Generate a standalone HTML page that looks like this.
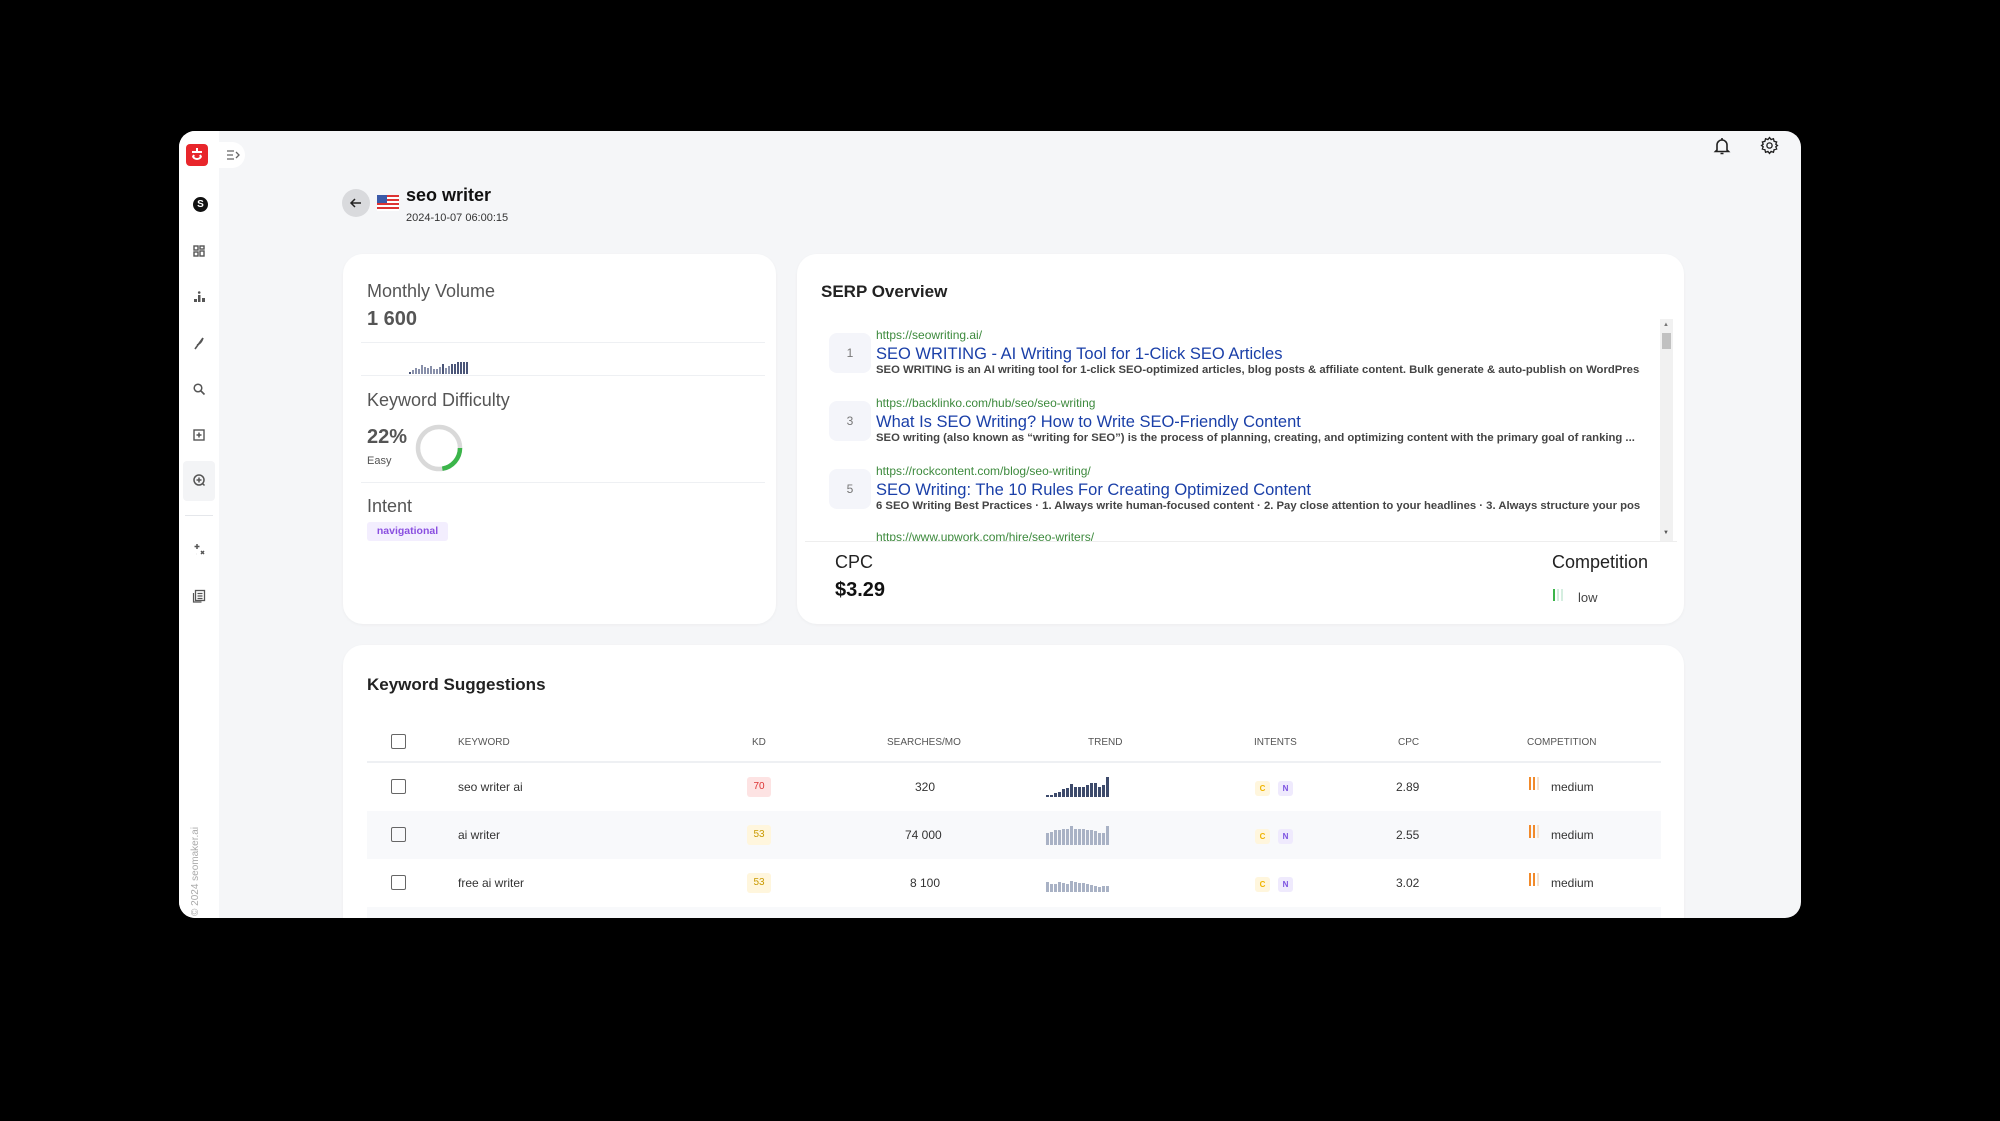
<!DOCTYPE html>
<html><head><meta charset="utf-8"><style>
*{box-sizing:border-box;margin:0;padding:0}
body{width:2000px;height:1121px;background:#000;font-family:"Liberation Sans",Arial,sans-serif;position:relative;overflow:hidden}
.a{position:absolute}
.win{left:179px;top:131px;width:1622px;height:787px;background:#f5f6f8;border-radius:16px;overflow:hidden}
.side{left:0;top:0;width:40px;height:787px;background:#fff}
.card{background:#fff;border-radius:20px;box-shadow:0 1px 3px rgba(0,0,0,.04)}
.ic{width:16px;height:16px;left:12px}
.hr{height:1px;background:#eef0f3}
.spark{display:flex;align-items:flex-end;gap:1px}
.spark i{display:block;width:2px}
.t i{width:3px}
.kd{width:24px;height:20px;border-radius:3px;font-size:10px;text-align:center;line-height:20px}
.tag{width:15px;height:15px;border-radius:3px;font-size:8px;font-weight:bold;text-align:center;line-height:15px}
.cell{font-size:12px;color:#333}
.th{font-size:10px;color:#555;top:737px}
.cb{width:15px;height:15px;border:1.5px solid #666;border-radius:2px;left:391px}
.num{width:42px;height:40px;border-radius:8px;background:#f4f5fa;color:#777;font-size:12px;text-align:center;line-height:40px;left:829px}
.url{font-size:12px;color:#3d8a3d;left:876px}
.ttl{font-size:16.5px;color:#1a3fa8;left:876px}
.dsc{font-size:11.3px;color:#444;font-weight:bold;left:876px;width:764px;white-space:nowrap;overflow:hidden}
</style></head><body>
<div class="a win">
 <div class="a side">
  <div class="a" style="left:7px;top:13px;width:22px;height:22px;background:#e8262b;border-radius:4px"><svg width="22" height="22"><path d="M11 4v3M6 8h10M7 12a4 3 0 0 0 8 0M8 11l-1 2M14 11l1 2" stroke="#fff" stroke-width="2" fill="none"/></svg></div>
  <div class="a" style="left:14px;top:66px;width:15px;height:15px;border-radius:50%;background:#111;color:#fff;font-size:10px;font-weight:bold;text-align:center;line-height:15px">S</div>
  <svg class="a ic" style="top:112px" viewBox="0 0 16 16"><g fill="none" stroke="#555" stroke-width="1.4"><rect x="3" y="3" width="4" height="4"/><rect x="9" y="3" width="4" height="3"/><rect x="3" y="9" width="4" height="4"/><rect x="9" y="8" width="4" height="5"/></g></svg>
  <svg class="a ic" style="top:158px" viewBox="0 0 16 16"><g fill="#555"><rect x="3" y="10" width="3" height="3"/><rect x="7" y="6" width="2.5" height="7"/><circle cx="8.2" cy="3.5" r="1.3"/><rect x="11" y="9" width="3" height="4"/></g></svg>
  <svg class="a ic" style="top:204px" viewBox="0 0 16 16"><path d="M4 14L12 3M6 10c3-1 5-4 6-7" stroke="#555" stroke-width="1.6" fill="none"/></svg>
  <svg class="a ic" style="top:250px" viewBox="0 0 16 16"><circle cx="7" cy="7" r="3.8" fill="none" stroke="#555" stroke-width="1.5"/><path d="M10 10l3.5 3.5" stroke="#555" stroke-width="1.6"/></svg>
  <svg class="a ic" style="top:296px" viewBox="0 0 16 16"><rect x="3" y="3" width="10" height="10" fill="none" stroke="#555" stroke-width="1.4"/><path d="M8 5.5v5M5.5 8h5" stroke="#555" stroke-width="1.5"/></svg>
  <div class="a" style="left:4px;top:330px;width:32px;height:40px;background:#f3f4f6;border-radius:4px"></div>
  <svg class="a ic" style="top:341px" viewBox="0 0 16 16"><circle cx="8" cy="8" r="5" fill="none" stroke="#555" stroke-width="1.5"/><path d="M8 5.5v5M5.5 8h5M11.5 11.5l2 2" stroke="#555" stroke-width="1.5"/></svg>
  <div class="a" style="left:6px;top:384px;width:28px;height:1px;background:#e5e7eb"></div>
  <svg class="a ic" style="top:411px" viewBox="0 0 16 16"><path d="M6 2v5M3.5 4.5h5M10 9l3 3M13 9l-3 3M5 12h.1" stroke="#555" stroke-width="1.5"/></svg>
  <svg class="a ic" style="top:457px" viewBox="0 0 16 16"><rect x="4.5" y="2.5" width="9" height="10" fill="none" stroke="#555" stroke-width="1.3"/><path d="M2.5 5v9h8M6.5 5.5h5M6.5 8h5M6.5 10.5h5" stroke="#555" stroke-width="1.2" fill="none"/></svg>
  <div class="a" style="left:11px;top:785px;transform:rotate(-90deg);transform-origin:0 0;font-size:10px;color:#aaa;white-space:nowrap">© 2024 seomaker.ai</div>
 </div>
 <div class="a" style="left:40px;top:11px;width:26px;height:26px;background:#fff;border-radius:0 13px 13px 0"></div>
 <svg class="a" style="left:47px;top:18px" width="14" height="12" viewBox="0 0 14 12"><path d="M1 2h7M1 6h6M1 10h7M10 3l3 3-3 3" stroke="#666" stroke-width="1.3" fill="none"/></svg>
 <svg class="a" style="left:1534px;top:5px" width="18" height="20" viewBox="0 0 18 20"><path d="M4 14V9a5 5 0 0 1 10 0v5l1.5 1.5h-13z M7.5 17.5h3" stroke="#222" stroke-width="1.6" fill="none"/><path d="M9 2v2" stroke="#222" stroke-width="1.6"/></svg>
 <svg class="a" style="left:1581px;top:5px" width="19" height="19" viewBox="0 0 24 24"><path d="M12 2l2 2.5 3-1 .8 3.2 3.2.8-1 3L22 12l-2 1.5 1 3-3.2.8-.8 3.2-3-1L12 22l-2-2.5-3 1-.8-3.2L3 16.5l1-3L2 12l2-1.5-1-3 3.2-.8L7 3.5l3 1z" fill="none" stroke="#222" stroke-width="1.7"/><circle cx="12" cy="12" r="3.3" fill="none" stroke="#222" stroke-width="1.7"/></svg>
</div>

<div class="a" style="left:342px;top:189px;width:28px;height:28px;border-radius:50%;background:#d9dadd"></div>
<svg class="a" style="left:349px;top:196px" width="14" height="14" viewBox="0 0 14 14"><path d="M12 7H2M6 3L2 7l4 4" stroke="#222" stroke-width="1.5" fill="none"/></svg>
<svg class="a" style="left:377px;top:195px" width="22" height="16" viewBox="0 0 22 16"><rect width="22" height="16" fill="#fff"/><g fill="#d33"><rect y="0" width="22" height="2"/><rect y="4" width="22" height="2"/><rect y="8" width="22" height="2"/><rect y="12" width="22" height="2"/></g><rect width="10" height="8" fill="#3b5aa8"/></svg>
<div class="a" style="left:406px;top:185px;font-size:18px;font-weight:bold;color:#111">seo writer</div>
<div class="a" style="left:406px;top:212px;font-size:11px;color:#333">2024-10-07 06:00:15</div>

<div class="a card" style="left:343px;top:254px;width:433px;height:370px"></div>
<div class="a" style="left:367px;top:281px;font-size:18px;color:#555">Monthly Volume</div>
<div class="a" style="left:367px;top:308px;font-size:20px;font-weight:bold;color:#555">1 600</div>
<div class="a hr" style="left:361px;top:342px;width:404px"></div>
<div class="a spark" style="left:409px;top:362px;height:12px"><i style="height:2px;background:#4a5578"></i><i style="height:4px;background:#8890aa"></i><i style="height:6px;background:#8890aa"></i><i style="height:5px;background:#8890aa"></i><i style="height:9px;background:#8890aa"></i><i style="height:7px;background:#8890aa"></i><i style="height:6px;background:#8890aa"></i><i style="height:8px;background:#8890aa"></i><i style="height:5px;background:#8890aa"></i><i style="height:5px;background:#8890aa"></i><i style="height:7px;background:#8890aa"></i><i style="height:10px;background:#4a5578"></i><i style="height:6px;background:#8890aa"></i><i style="height:8px;background:#8890aa"></i><i style="height:10px;background:#4a5578"></i><i style="height:10px;background:#4a5578"></i><i style="height:12px;background:#4a5578"></i><i style="height:12px;background:#4a5578"></i><i style="height:12px;background:#4a5578"></i><i style="height:12px;background:#4a5578"></i></div>
<div class="a hr" style="left:361px;top:375px;width:404px"></div>
<div class="a" style="left:367px;top:390px;font-size:18px;color:#555">Keyword Difficulty</div>
<div class="a" style="left:367px;top:426px;font-size:20px;font-weight:bold;color:#555">22%</div>
<div class="a" style="left:367px;top:455px;font-size:11px;color:#555">Easy</div>
<svg class="a" style="left:414px;top:423px" width="50" height="50" viewBox="0 0 50 50"><circle cx="25" cy="25" r="21" fill="none" stroke="#d9d9d9" stroke-width="4.5"/><path d="M46 25A21 21 0 0 1 28.3 45.7" fill="none" stroke="#3bb54a" stroke-width="4.5"/></svg>
<div class="a hr" style="left:361px;top:482px;width:404px"></div>
<div class="a" style="left:367px;top:496px;font-size:18px;color:#555">Intent</div>
<div class="a" style="left:367px;top:522px;width:81px;height:19px;background:#f3eefe;border-radius:3px;color:#8a4fe0;font-size:10.5px;font-weight:bold;text-align:center;line-height:19px">navigational</div>

<div class="a card" style="left:797px;top:254px;width:887px;height:370px"></div>
<div class="a" style="left:821px;top:282px;font-size:17px;font-weight:bold;color:#222">SERP Overview</div>
<div class="a" style="left:1660px;top:319px;width:13px;height:222px;background:#f1f1f1"></div>
<div class="a" style="left:1662px;top:333px;width:9px;height:16px;background:#c1c1c1"></div>
<div class="a" style="left:1663px;top:322px;font-size:6px;color:#777">▲</div>
<div class="a" style="left:1663px;top:530px;font-size:6px;color:#555">▼</div>
<div class="a num" style="top:333px">1</div>
<div class="a url" style="top:328px">https://seowriting.ai/</div>
<div class="a ttl" style="top:345px">SEO WRITING - AI Writing Tool for 1-Click SEO Articles</div>
<div class="a dsc" style="top:364px">SEO WRITING is an AI writing tool for 1-click SEO-optimized articles, blog posts &amp; affiliate content. Bulk generate &amp; auto-publish on WordPress</div>
<div class="a num" style="top:401px">3</div>
<div class="a url" style="top:396px">https://backlinko.com/hub/seo/seo-writing</div>
<div class="a ttl" style="top:413px">What Is SEO Writing? How to Write SEO-Friendly Content</div>
<div class="a dsc" style="top:432px">SEO writing (also known as “writing for SEO”) is the process of planning, creating, and optimizing content with the primary goal of ranking ...</div>
<div class="a num" style="top:469px">5</div>
<div class="a url" style="top:464px">https://rockcontent.com/blog/seo-writing/</div>
<div class="a ttl" style="top:481px">SEO Writing: The 10 Rules For Creating Optimized Content</div>
<div class="a dsc" style="top:500px">6 SEO Writing Best Practices · 1. Always write human-focused content · 2. Pay close attention to your headlines · 3. Always structure your post</div>
<div class="a" style="left:821px;top:532px;width:839px;height:9px;overflow:hidden"><div style="margin-left:55px;font-size:12px;color:#3d8a3d;margin-top:-2px">https://www.upwork.com/hire/seo-writers/</div></div>
<div class="a" style="left:805px;top:541px;width:872px;height:1px;background:#eee"></div>
<div class="a" style="left:835px;top:552px;font-size:18px;color:#222">CPC</div>
<div class="a" style="left:835px;top:579px;font-size:20px;font-weight:bold;color:#111">$3.29</div>
<div class="a" style="left:1552px;top:552px;font-size:18px;color:#222">Competition</div>
<div class="a" style="left:1553px;top:589px;width:2px;height:12px;background:#3bb54a"></div>
<div class="a" style="left:1557px;top:589px;width:2px;height:12px;background:#d5eee0"></div>
<div class="a" style="left:1561px;top:589px;width:2px;height:12px;background:#d5eee0"></div>
<div class="a" style="left:1578px;top:590px;font-size:13px;color:#444">low</div>

<div class="a card" style="left:343px;top:645px;width:1341px;height:300px"></div>
<div class="a" style="left:367px;top:675px;font-size:17px;font-weight:bold;color:#222">Keyword Suggestions</div>
<div class="a cb" style="top:734px"></div>
<div class="a th" style="left:458px">KEYWORD</div>
<div class="a th" style="left:752px">KD</div>
<div class="a th" style="left:887px">SEARCHES/MO</div>
<div class="a th" style="left:1088px">TREND</div>
<div class="a th" style="left:1254px">INTENTS</div>
<div class="a th" style="left:1398px">CPC</div>
<div class="a th" style="left:1527px">COMPETITION</div>
<div class="a" style="left:367px;top:761px;width:1294px;height:2px;background:#eef0f3"></div>
<div class="a" style="left:367px;top:811px;width:1294px;height:48px;background:#f8f9fb"></div>
<div class="a" style="left:367px;top:907px;width:1294px;height:11px;background:#f8f9fb"></div>

<div class="a cb" style="top:779px"></div>
<div class="a cell" style="left:458px;top:780px">seo writer ai</div>
<div class="a kd" style="left:747px;top:777px;background:#fde3e3;color:#d33">70</div>
<div class="a cell" style="left:915px;top:780px">320</div>
<div class="a spark t" style="left:1046px;top:777px;height:20px"><i style="height:2px;background:#3d4a6b"></i><i style="height:2px;background:#3d4a6b"></i><i style="height:4px;background:#3d4a6b"></i><i style="height:5px;background:#3d4a6b"></i><i style="height:8px;background:#3d4a6b"></i><i style="height:9px;background:#3d4a6b"></i><i style="height:13px;background:#3d4a6b"></i><i style="height:10px;background:#3d4a6b"></i><i style="height:10px;background:#3d4a6b"></i><i style="height:10px;background:#3d4a6b"></i><i style="height:12px;background:#3d4a6b"></i><i style="height:14px;background:#3d4a6b"></i><i style="height:14px;background:#3d4a6b"></i><i style="height:10px;background:#3d4a6b"></i><i style="height:12px;background:#3d4a6b"></i><i style="height:20px;background:#3d4a6b"></i></div>
<div class="a tag" style="left:1255px;top:781px;background:#fff6dd;color:#f0b400">C</div>
<div class="a tag" style="left:1278px;top:781px;background:#efeafd;color:#7a4fe0">N</div>
<div class="a cell" style="left:1396px;top:780px">2.89</div>
<div class="a" style="left:1529px;top:777px;width:2px;height:13px;background:#f28a2a"></div>
<div class="a" style="left:1533px;top:777px;width:2px;height:13px;background:#f28a2a"></div>
<div class="a" style="left:1537px;top:777px;width:2px;height:13px;background:#f6e3d0"></div>
<div class="a cell" style="left:1551px;top:780px">medium</div>

<div class="a cb" style="top:827px"></div>
<div class="a cell" style="left:458px;top:828px">ai writer</div>
<div class="a kd" style="left:747px;top:825px;background:#fff6dd;color:#c99a00">53</div>
<div class="a cell" style="left:905px;top:828px">74 000</div>
<div class="a spark t" style="left:1046px;top:826px;height:19px"><i style="height:12px;background:#a9b2c5"></i><i style="height:13px;background:#a9b2c5"></i><i style="height:15px;background:#a9b2c5"></i><i style="height:15px;background:#a9b2c5"></i><i style="height:16px;background:#a9b2c5"></i><i style="height:16px;background:#a9b2c5"></i><i style="height:19px;background:#a9b2c5"></i><i style="height:16px;background:#a9b2c5"></i><i style="height:16px;background:#a9b2c5"></i><i style="height:16px;background:#a9b2c5"></i><i style="height:15px;background:#a9b2c5"></i><i style="height:15px;background:#a9b2c5"></i><i style="height:14px;background:#a9b2c5"></i><i style="height:12px;background:#a9b2c5"></i><i style="height:12px;background:#a9b2c5"></i><i style="height:19px;background:#a9b2c5"></i></div>
<div class="a tag" style="left:1255px;top:829px;background:#fff6dd;color:#f0b400">C</div>
<div class="a tag" style="left:1278px;top:829px;background:#efeafd;color:#7a4fe0">N</div>
<div class="a cell" style="left:1396px;top:828px">2.55</div>
<div class="a" style="left:1529px;top:825px;width:2px;height:13px;background:#f28a2a"></div>
<div class="a" style="left:1533px;top:825px;width:2px;height:13px;background:#f28a2a"></div>
<div class="a" style="left:1537px;top:825px;width:2px;height:13px;background:#f6e3d0"></div>
<div class="a cell" style="left:1551px;top:828px">medium</div>

<div class="a cb" style="top:875px"></div>
<div class="a cell" style="left:458px;top:876px">free ai writer</div>
<div class="a kd" style="left:747px;top:873px;background:#fff6dd;color:#c99a00">53</div>
<div class="a cell" style="left:910px;top:876px">8 100</div>
<div class="a spark t" style="left:1046px;top:879px;height:13px"><i style="height:10px;background:#a9b2c5"></i><i style="height:8px;background:#a9b2c5"></i><i style="height:8px;background:#a9b2c5"></i><i style="height:10px;background:#a9b2c5"></i><i style="height:9px;background:#a9b2c5"></i><i style="height:8px;background:#a9b2c5"></i><i style="height:11px;background:#a9b2c5"></i><i style="height:10px;background:#a9b2c5"></i><i style="height:9px;background:#a9b2c5"></i><i style="height:9px;background:#a9b2c5"></i><i style="height:8px;background:#a9b2c5"></i><i style="height:7px;background:#a9b2c5"></i><i style="height:6px;background:#a9b2c5"></i><i style="height:5px;background:#a9b2c5"></i><i style="height:6px;background:#a9b2c5"></i><i style="height:6px;background:#a9b2c5"></i></div>
<div class="a tag" style="left:1255px;top:877px;background:#fff6dd;color:#f0b400">C</div>
<div class="a tag" style="left:1278px;top:877px;background:#efeafd;color:#7a4fe0">N</div>
<div class="a cell" style="left:1396px;top:876px">3.02</div>
<div class="a" style="left:1529px;top:873px;width:2px;height:13px;background:#f28a2a"></div>
<div class="a" style="left:1533px;top:873px;width:2px;height:13px;background:#f28a2a"></div>
<div class="a" style="left:1537px;top:873px;width:2px;height:13px;background:#f6e3d0"></div>
<div class="a cell" style="left:1551px;top:876px">medium</div>

<div class="a" style="left:0;top:918px;width:2000px;height:203px;background:#000"></div>
</body></html>
